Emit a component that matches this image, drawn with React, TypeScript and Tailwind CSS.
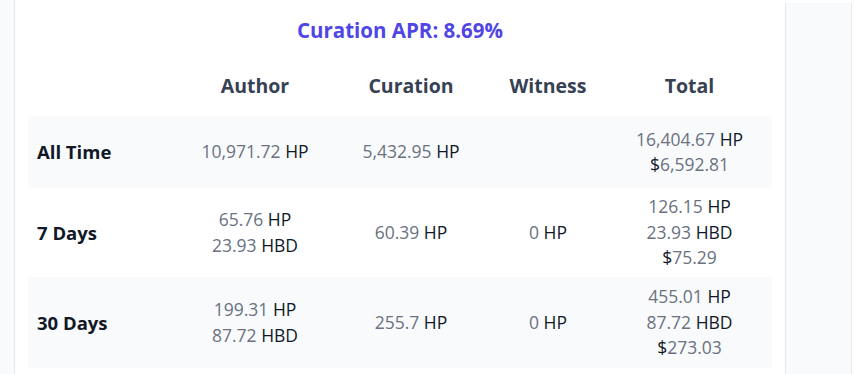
import type React from 'react';

type Cell = [string, string][];

interface Row {
    label: string;
    author: Cell;
    curation: Cell;
    witness: Cell;
    total: Cell;
}

const rows: Row[] = [
    {
        label: 'All Time',
        author: [['10,971.72', 'HP']],
        curation: [['5,432.95', 'HP']],
        witness: [],
        total: [
            ['16,404.67', 'HP'],
            ['$', '6,592.81'],
        ],
    },
    {
        label: '7 Days',
        author: [
            ['65.76', 'HP'],
            ['23.93', 'HBD'],
        ],
        curation: [['60.39', 'HP']],
        witness: [['0', 'HP']],
        total: [
            ['126.15', 'HP'],
            ['23.93', 'HBD'],
            ['$', '75.29'],
        ],
    },
    {
        label: '30 Days',
        author: [
            ['199.31', 'HP'],
            ['87.72', 'HBD'],
        ],
        curation: [['255.7', 'HP']],
        witness: [['0', 'HP']],
        total: [
            ['455.01', 'HP'],
            ['87.72', 'HBD'],
            ['$', '273.03'],
        ],
    },
];

const Amount: React.FC<{ cell: Cell }> = ({ cell }) => (
    <div className="flex flex-col items-center">
        {cell.map(([a, b], i) =>
            a == '$' ? (
                <p key={i} className="text-gray-500">
                    <span className="text-gray-900">$</span>
                    {b}
                </p>
            ) : (
                <p key={i} className="text-gray-500">
                    {a} <span className="text-gray-900">{b}</span>
                </p>
            ),
        )}
    </div>
);

const App: React.FC = () => {
    return (
        <div
            className="flex h-[374px] w-[854px] bg-white"
            style={{ fontFamily: '"Open Sans", "Noto Sans", sans-serif' }}
        >
            {/* left gutter */}
            <div className="w-[15px] border-r border-gray-200 bg-gray-50" />

            {/* card */}
            <div className="w-[770px] px-[13px]">
                <p className="pt-[15px] text-center text-[20.5px] leading-[30px] font-bold text-[#4f46e5]">
                    Curation APR: 8.69%
                </p>
                <div className="grid grid-cols-[152px_150px_162px_112px_171px] pt-[27px] pb-[16px] text-center text-[19.5px] leading-[28px] font-bold text-gray-700">
                    <span />
                    <span>Author</span>
                    <span>Curation</span>
                    <span>Witness</span>
                    <span>Total</span>
                </div>
                <div className="text-[17.5px] leading-[25.5px]">
                    {rows.map((row, i) => (
                        <div
                            key={row.label}
                            className={`grid grid-cols-[152px_150px_162px_112px_171px] items-center ${
                                i % 2 == 0 ? 'bg-gray-50' : 'bg-white'
                            } ${i == 0 ? 'h-[72px]' : i == 1 ? 'h-[89px]' : 'h-[91px]'}`}
                        >
                            <span className="pl-[9px] text-[18.5px] font-bold text-gray-900">
                                {row.label}
                            </span>
                            <Amount cell={row.author} />
                            <Amount cell={row.curation} />
                            <Amount cell={row.witness} />
                            <Amount cell={row.total} />
                        </div>
                    ))}
                </div>
            </div>

            {/* right panel */}
            <div className="mt-[3px] w-[67px] border-x border-gray-200 bg-gray-50" />
        </div>
    );
};

export default App;
